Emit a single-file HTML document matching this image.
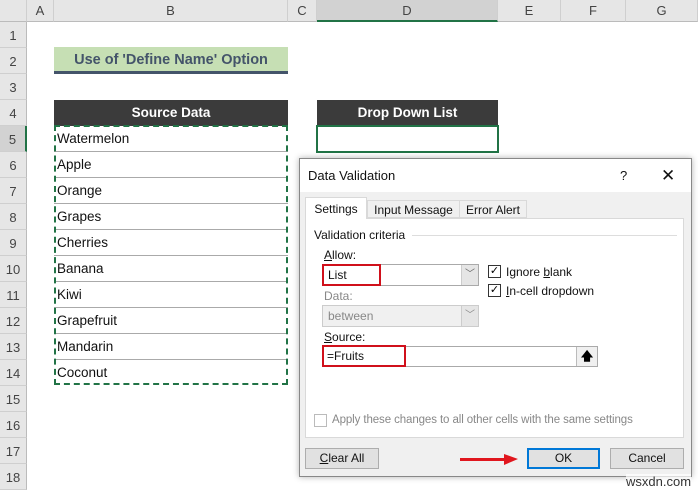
<!DOCTYPE html><html><head><style>
body{margin:0;width:698px;height:487px;overflow:hidden;background:#fff;font-family:"Liberation Sans",sans-serif;position:relative}
.a{position:absolute;box-sizing:border-box}
.ch{background:#e6e6e6;color:#444;font-size:13px;text-align:center;line-height:22px;top:0;height:22px;border-right:1px solid #cfcfcf;border-bottom:1px solid #bbb}
.rh{background:#e6e6e6;color:#444;font-size:13px;text-align:center;left:0;width:27px;height:26px;line-height:28px;border-bottom:1px solid #cfcfcf;border-right:1px solid #bbb}
.cell{left:54px;width:234px;height:26px;border-bottom:1px solid #aaa;font-size:13.5px;line-height:26px;padding-left:3px;color:#111}
.d{font-family:"Liberation Sans",sans-serif;font-size:12px;color:#111}
.btn{background:#e1e1e1;border:1px solid #adadad;text-align:center;line-height:19px;font-size:12px;height:21px}
.cb{width:13px;height:13px;border:1px solid #333;background:#fff;font-size:11px;line-height:11px;text-align:center}
</style></head><body>
<div class="a ch" style="left:0;width:27px"></div>
<div class="a ch" style="left:27px;width:27px">A</div>
<div class="a ch" style="left:54px;width:234px">B</div>
<div class="a ch" style="left:288px;width:29px">C</div>
<div class="a ch" style="left:317px;width:181px;background:#d2d2d2;border-bottom:2px solid #217346">D</div>
<div class="a ch" style="left:498px;width:63px">E</div>
<div class="a ch" style="left:561px;width:65px">F</div>
<div class="a ch" style="left:626px;width:72px">G</div>
<div class="a rh" style="top:22px">1</div><div class="a rh" style="top:48px">2</div><div class="a rh" style="top:74px">3</div><div class="a rh" style="top:100px">4</div>
<div class="a rh" style="top:126px;background:#d2d2d2;border-right:2px solid #217346">5</div>
<div class="a rh" style="top:152px">6</div><div class="a rh" style="top:178px">7</div><div class="a rh" style="top:204px">8</div><div class="a rh" style="top:230px">9</div><div class="a rh" style="top:256px">10</div><div class="a rh" style="top:282px">11</div><div class="a rh" style="top:308px">12</div><div class="a rh" style="top:334px">13</div><div class="a rh" style="top:360px">14</div><div class="a rh" style="top:386px">15</div><div class="a rh" style="top:412px">16</div><div class="a rh" style="top:438px">17</div><div class="a rh" style="top:464px">18</div>
<div class="a" style="left:54px;top:47px;width:234px;height:27px;background:#c6dfb4;border-bottom:3px solid #44546a;color:#44546a;font-weight:bold;font-size:14.5px;text-align:center;line-height:26px">Use of 'Define Name' Option</div>
<div class="a" style="left:54px;top:100px;width:234px;height:26px;background:#3b3b3b;color:#fff;font-weight:bold;font-size:13.5px;text-align:center;line-height:26px">Source Data</div>
<div class="a" style="left:317px;top:100px;width:181px;height:26px;background:#3b3b3b;color:#fff;font-weight:bold;font-size:13.5px;text-align:center;line-height:26px">Drop Down List</div>
<div class="a" style="left:316px;top:125px;width:183px;height:28px;border:2px solid #217346"></div>
<div class="a cell" style="top:126px">Watermelon</div><div class="a cell" style="top:152px">Apple</div><div class="a cell" style="top:178px">Orange</div><div class="a cell" style="top:204px">Grapes</div><div class="a cell" style="top:230px">Cherries</div><div class="a cell" style="top:256px">Banana</div><div class="a cell" style="top:282px">Kiwi</div><div class="a cell" style="top:308px">Grapefruit</div><div class="a cell" style="top:334px">Mandarin</div><div class="a cell" style="top:360px;border-bottom:none">Coconut</div>
<div class="a" style="left:54px;top:125px;width:234px;height:260px;border:2px dashed #217346"></div>
<div class="a d" style="left:299px;top:158px;width:393px;height:319px;background:#f0f0f0;border:1px solid #888;box-shadow:0 0 6px rgba(0,0,0,.3)">
<div class="a" style="left:0;top:0;width:391px;height:33px;background:#fff;font-size:13px;line-height:33px;padding-left:8px">Data Validation<span style="position:absolute;left:320px">?</span><span style="position:absolute;left:361px;font-size:17px">✕</span></div>
</div>
<div class="a d" style="left:305px;top:218px;width:379px;height:220px;background:#fff;border:1px solid #d9d9d9"></div>
<div class="a d" style="left:305px;top:197px;width:62px;height:22px;background:#fff;border:1px solid #d9d9d9;border-bottom:none;line-height:22px;text-align:center">Settings</div>
<div class="a d" style="left:367px;top:200px;width:93px;height:18px;background:#f0f0f0;border:1px solid #d9d9d9;line-height:18px;text-align:center">Input Message</div>
<div class="a d" style="left:459px;top:200px;width:68px;height:18px;background:#f0f0f0;border:1px solid #d9d9d9;line-height:18px;text-align:center">Error Alert</div>
<div class="a d" style="left:314px;top:228px">Validation criteria</div>
<div class="a" style="left:412px;top:235px;width:265px;height:1px;background:#ddd"></div>
<div class="a d" style="left:324px;top:248px"><u>A</u>llow:</div>
<div class="a" style="left:322px;top:264px;width:157px;height:22px;border:1px solid #aaa;background:#fff"></div>
<div class="a" style="left:461px;top:265px;width:17px;height:20px;background:#e5e5e5;border-left:1px solid #ccc;color:#666;font-size:10px;text-align:center;line-height:20px">﹀</div>
<div class="a d" style="left:322px;top:264px;width:59px;height:22px;border:2px solid #d0101b;line-height:18px;padding-left:4px">List</div>
<div class="a cb" style="left:488px;top:265px">✓</div><div class="a d" style="left:506px;top:265px">Ignore <u>b</u>lank</div>
<div class="a cb" style="left:488px;top:284px">✓</div><div class="a d" style="left:506px;top:284px"><u>I</u>n-cell dropdown</div>
<div class="a d" style="left:324px;top:289px;color:#888">Data:</div>
<div class="a d" style="left:322px;top:305px;width:157px;height:22px;border:1px solid #ccc;background:#f0f0f0;color:#888;line-height:20px;padding-left:5px">between</div>
<div class="a" style="left:461px;top:306px;width:17px;height:20px;background:#e5e5e5;border-left:1px solid #ccc;color:#888;font-size:10px;text-align:center;line-height:20px">﹀</div>
<div class="a d" style="left:324px;top:330px"><u>S</u>ource:</div>
<div class="a" style="left:322px;top:346px;width:276px;height:21px;border:1px solid #aaa;background:#fff"></div>
<div class="a" style="left:576px;top:347px;width:21px;height:19px;background:#f0f0f0;border-left:1px solid #bbb;font-size:12px;text-align:center;line-height:19px;font-weight:bold">🡅</div>
<div class="a d" style="left:322px;top:345px;width:84px;height:22px;border:2px solid #d0101b;line-height:18px;padding-left:3px">=Fruits</div>
<div class="a cb" style="left:314px;top:414px;border-color:#bbb"></div>
<div class="a d" style="left:332px;top:414px;color:#888;font-size:11.5px;letter-spacing:-0.1px">Apply these changes to all other cells with the same settings</div>
<div class="a btn d" style="left:305px;top:448px;width:74px"><u>C</u>lear All</div>
<div class="a btn d" style="left:527px;top:448px;width:73px;border:2px solid #0078d7;line-height:17px">OK</div>
<div class="a btn d" style="left:610px;top:448px;width:74px">Cancel</div>
<div class="a" style="left:460px;top:458px;width:46px;height:3px;background:#e0161e"></div>
<div class="a" style="left:504px;top:454px;width:0;height:0;border-left:14px solid #e0161e;border-top:5px solid transparent;border-bottom:6px solid transparent"></div>
<div class="a" style="left:626px;top:474px;font-size:13px;color:#333;background:rgba(255,255,255,.7)">wsxdn.com</div>
</body></html>
